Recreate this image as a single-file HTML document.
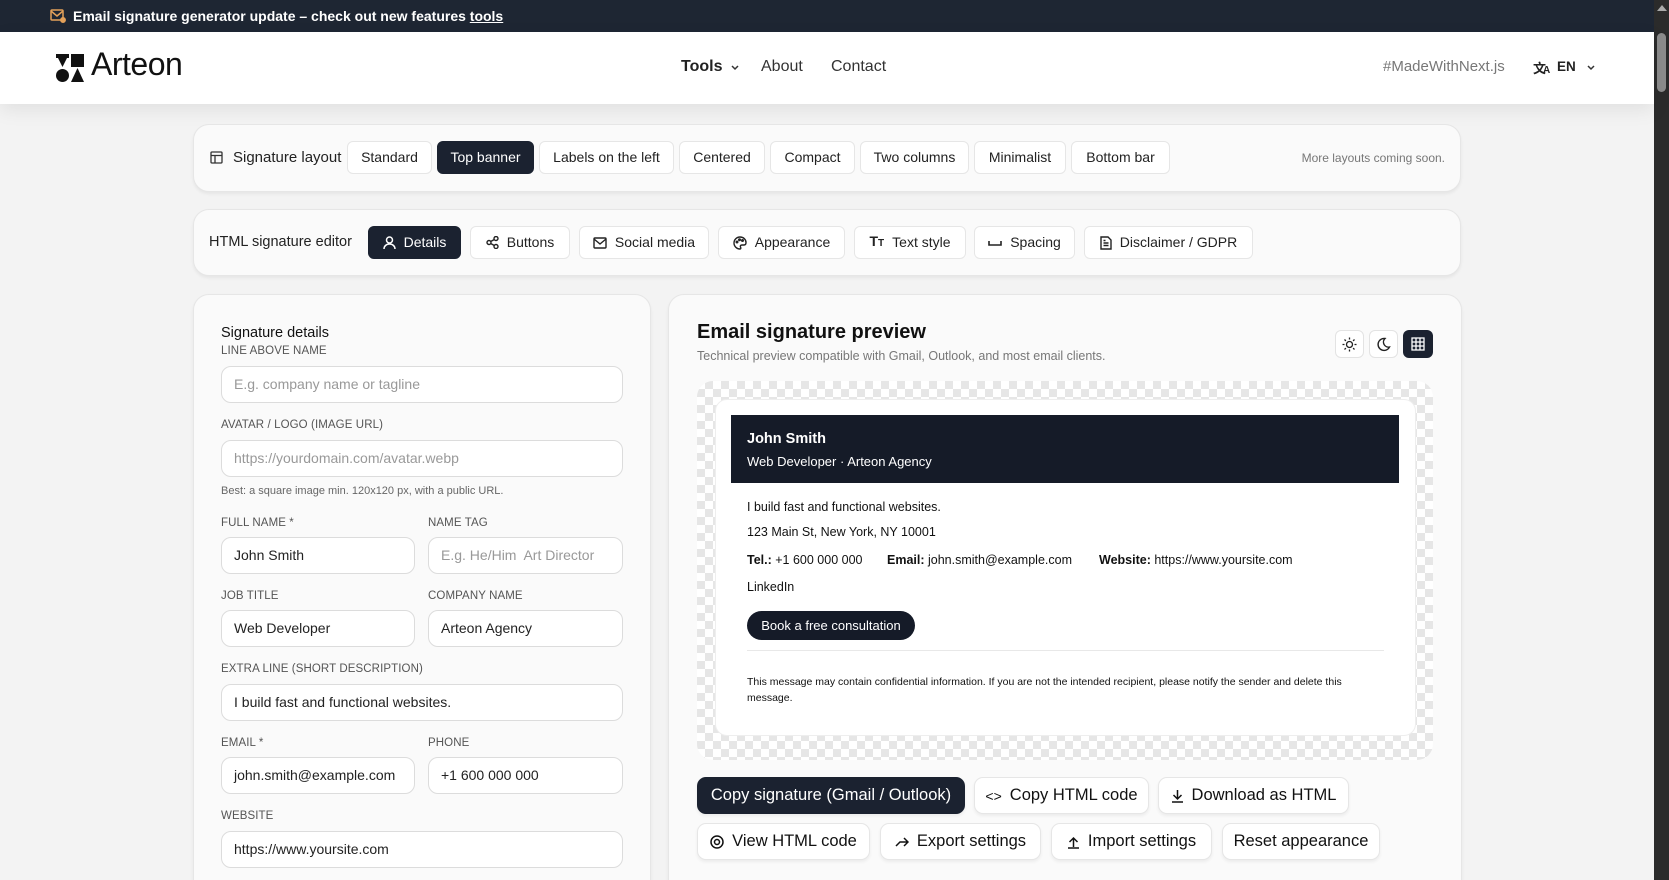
<!DOCTYPE html>
<html><head><meta charset="utf-8"><style>
*{box-sizing:border-box;margin:0;padding:0}
html,body{width:1669px;height:880px;overflow:hidden}
body{background:#f3f3f3;font-family:"Liberation Sans",sans-serif;color:#111}
#w{position:relative;width:1669px;height:880px;overflow:hidden}
.a{position:absolute}
.topbar{left:0;top:0;width:1654px;height:32px;background:#1e2633;color:#fff;font-size:14px;font-weight:bold;line-height:32px}
.hdr{left:0;top:32px;width:1654px;height:72px;background:#fff;box-shadow:0 6px 18px rgba(0,0,0,.08)}
.card{background:#fafafa;border:1px solid #e6e6e6;border-radius:16px;box-shadow:0 2px 3px rgba(0,0,0,.06)}
.btn{position:absolute;height:33px;border:1px solid #e6e6e6;background:#fff;border-radius:6px;font-size:14px;line-height:31px;text-align:center;color:#222;display:flex;align-items:center;justify-content:center;gap:8px;white-space:nowrap}
.btn.on{background:#1b2230;color:#fff;border-color:#1b2230}
.lbl{position:absolute;left:221px;font-size:11.5px;color:#555;text-transform:uppercase;letter-spacing:.1px}
.inp{position:absolute;height:37px;border:1px solid #dcdcdc;border-radius:10px;background:#fff;font-size:14px;line-height:35px;padding-left:12px;color:#222}
.ph{color:#999}
.b2{position:absolute;height:37px;border:1px solid #e6e6e6;border-radius:9px;background:#fff;font-size:16.5px;display:flex;align-items:center;justify-content:center;gap:8px;color:#111;box-shadow:0 2px 3px rgba(0,0,0,.06);white-space:nowrap}
.sig{font-family:"Liberation Sans",Arial,sans-serif;font-size:12.5px;color:#111;white-space:nowrap}
svg{display:block}
</style></head><body><div id="w">
<div class="a topbar"><span class="a" style="left:50px;top:9px"><svg width="16" height="14" viewBox="0 0 16 14" fill="none" stroke="#e4a15a" stroke-width="1.5"><rect x="1" y="1" width="12" height="10" rx="1"/><path d="M1 2l6 5 6-5"/><circle cx="13" cy="11" r="2.2" fill="#e4a15a"/></svg></span><span class="a" style="left:73px">Email signature generator update – check out new features <u>tools</u></span></div>
<div class="a" style="left:1654px;top:0;width:15px;height:880px;background:#2b2b2b"></div>
<div class="a" style="left:1657px;top:33px;width:9px;height:59px;background:#8c8c8c;border-radius:5px"></div>
<div class="a" style="left:1657px;top:5px;width:0;height:0;border-left:5px solid transparent;border-right:5px solid transparent;border-bottom:6px solid #aaa"></div>
<div class="a hdr">
 <svg class="a" style="left:56px;top:22px" width="28" height="28" viewBox="0 0 28 28"><rect x="0" y="0" width="13" height="4" fill="#111"/><path d="M0 0L6.5 13 13 0z" fill="#111"/><rect x="15" y="0" width="13" height="13" fill="#111"/><circle cx="6.5" cy="21.5" r="6.5" fill="#111"/><path d="M21.5 14L28 28H15z" fill="#111"/></svg>
 <div class="a" style="left:91px;top:14px;font-size:32px;color:#111;letter-spacing:-.5px">Arteon</div>
 <div class="a" style="left:681px;top:26px;font-size:16px;font-weight:bold;color:#222">Tools</div>
 <svg class="a" style="left:731px;top:33px" width="8" height="6" viewBox="0 0 8 6" fill="none" stroke="#333" stroke-width="1.5"><path d="M1 1l3 3 3-3"/></svg>
 <div class="a" style="left:761px;top:26px;font-size:16px;color:#333">About</div>
 <div class="a" style="left:831px;top:26px;font-size:16px;color:#333">Contact</div>
 <div class="a" style="left:1383px;top:26px;font-size:15px;color:#777">#MadeWithNext.js</div>
 <div class="a" style="left:1533px;top:26px;font-size:13px;font-weight:bold;color:#222;font-family:'Liberation Sans','Noto Sans CJK SC',sans-serif">文</div>
 <div class="a" style="left:1543px;top:33px;font-size:10px;font-weight:bold;color:#222">A</div>
 <div class="a" style="left:1557px;top:27px;font-size:13.5px;font-weight:bold;color:#222">EN</div>
 <svg class="a" style="left:1587px;top:33px" width="8" height="6" viewBox="0 0 8 6" fill="none" stroke="#333" stroke-width="1.5"><path d="M1 1l3 3 3-3"/></svg>
</div>

<div class="a card" style="left:193px;top:124px;width:1268px;height:68px"></div>
<svg class="a" style="left:210px;top:151px" width="13" height="13" viewBox="0 0 13 13" fill="none" stroke="#333" stroke-width="1.3"><rect x="1" y="1" width="11" height="11" rx="1"/><path d="M1 4.5h11M5 4.5v7.5"/></svg>
<div class="a" style="left:233px;top:149px;font-size:15px;color:#222">Signature layout</div>
<div class="btn" style="left:347px;top:141px;width:85px">Standard</div>
<div class="btn on" style="left:437px;top:141px;width:97px">Top banner</div>
<div class="btn" style="left:539px;top:141px;width:135px">Labels on the left</div>
<div class="btn" style="left:679px;top:141px;width:86px">Centered</div>
<div class="btn" style="left:770px;top:141px;width:85px">Compact</div>
<div class="btn" style="left:860px;top:141px;width:109px">Two columns</div>
<div class="btn" style="left:974px;top:141px;width:92px">Minimalist</div>
<div class="btn" style="left:1071px;top:141px;width:99px">Bottom bar</div>
<div class="a" style="left:1245px;top:151px;font-size:12px;color:#777;width:200px;text-align:right;white-space:nowrap">More layouts coming soon.</div>

<div class="a card" style="left:193px;top:209px;width:1268px;height:67px"></div>
<div class="a" style="left:209px;top:234px;font-size:14.5px;color:#222">HTML signature editor</div>
<div class="btn on" style="left:368px;top:226px;width:93px"><svg width="13" height="14" viewBox="0 0 13 14" fill="none" stroke="#fff" stroke-width="1.5"><circle cx="6.5" cy="4" r="3"/><path d="M1 13c0-3 2.5-5 5.5-5s5.5 2 5.5 5"/></svg>Details</div>
<div class="btn" style="left:470px;top:226px;width:100px"><svg width="13" height="13" viewBox="0 0 13 13" fill="none" stroke="#222" stroke-width="1.4"><circle cx="3" cy="6.5" r="2"/><circle cx="10" cy="2.5" r="2"/><circle cx="10" cy="10.5" r="2"/><path d="M4.7 5.5l3.6-2M4.7 7.5l3.6 2"/></svg>Buttons</div>
<div class="btn" style="left:579px;top:226px;width:130px"><svg width="14" height="12" viewBox="0 0 14 12" fill="none" stroke="#222" stroke-width="1.4"><rect x="1" y="1" width="12" height="10" rx="1"/><path d="M1 2l6 5 6-5"/></svg>Social media</div>
<div class="btn" style="left:718px;top:226px;width:127px"><svg width="14" height="14" viewBox="0 0 14 14" fill="none" stroke="#222" stroke-width="1.4"><path d="M7 1a6 6 0 1 0 0 12c1 0 1-1 .5-2s0-2 1.5-2h2c1.5 0 2-1 2-2.5C13 3.5 10.5 1 7 1z"/><circle cx="4" cy="6" r=".8"/><circle cx="6.5" cy="3.8" r=".8"/><circle cx="9.5" cy="4.5" r=".8"/></svg>Appearance</div>
<div class="btn" style="left:854px;top:226px;width:112px"><span style="font-size:14px;font-weight:bold">T<span style="font-size:10px">T</span></span>Text style</div>
<div class="btn" style="left:974px;top:226px;width:101px"><svg width="14" height="8" viewBox="0 0 14 8" fill="none" stroke="#222" stroke-width="1.6"><path d="M1 2v4h12V2"/></svg>Spacing</div>
<div class="btn" style="left:1084px;top:226px;width:169px"><svg width="12" height="14" viewBox="0 0 12 14" fill="none" stroke="#222" stroke-width="1.4"><path d="M1 1h7l3 3v9H1z"/><path d="M3.5 7h5M3.5 9.5h5M3.5 4.5h2"/></svg>Disclaimer / GDPR</div>

<div class="a card" style="left:193px;top:294px;width:458px;height:620px"></div>
<div class="a" style="left:221px;top:325px;font-size:14.5px;color:#111">Signature details</div>
<div class="lbl" style="top:345px">Line above name</div>
<div class="inp ph" style="left:221px;top:366px;width:402px">E.g. company name or tagline</div>
<div class="lbl" style="top:419px">Avatar / logo (image URL)</div>
<div class="inp ph" style="left:221px;top:440px;width:402px">https://yourdomain.com/avatar.webp</div>
<div class="a" style="left:221px;top:485px;font-size:11px;color:#666">Best: a square image min. 120x120 px, with a public URL.</div>
<div class="lbl" style="top:517px">Full name *</div>
<div class="lbl" style="top:517px;left:428px">Name tag</div>
<div class="inp" style="left:221px;top:537px;width:194px">John Smith</div>
<div class="inp ph" style="left:428px;top:537px;width:195px">E.g. He/Him&nbsp; Art Director</div>
<div class="lbl" style="top:590px">Job title</div>
<div class="lbl" style="top:590px;left:428px">Company name</div>
<div class="inp" style="left:221px;top:610px;width:194px">Web Developer</div>
<div class="inp" style="left:428px;top:610px;width:195px">Arteon Agency</div>
<div class="lbl" style="top:663px">Extra line (short description)</div>
<div class="inp" style="left:221px;top:684px;width:402px">I build fast and functional websites.</div>
<div class="lbl" style="top:737px">Email *</div>
<div class="lbl" style="top:737px;left:428px">Phone</div>
<div class="inp" style="left:221px;top:757px;width:194px">john.smith@example.com</div>
<div class="inp" style="left:428px;top:757px;width:195px">+1 600 000 000</div>
<div class="lbl" style="top:810px">Website</div>
<div class="inp" style="left:221px;top:831px;width:402px">https://www.yoursite.com</div>

<div class="a card" style="left:668px;top:294px;width:794px;height:620px"></div>
<div class="a" style="left:697px;top:321px;font-size:20px;font-weight:bold;color:#111">Email signature preview</div>
<div class="a" style="left:697px;top:349px;font-size:12.5px;color:#777">Technical preview compatible with Gmail, Outlook, and most email clients.</div>
<div class="a" style="left:1335px;top:330px;width:29px;height:28px;border:1px solid #e3e3e3;border-radius:6px;background:#fff"><svg style="margin:6px" width="15" height="15" viewBox="0 0 15 15" fill="none" stroke="#222" stroke-width="1.3"><circle cx="7.5" cy="7.5" r="3"/><path d="M7.5 0.5v2M7.5 12.5v2M0.5 7.5h2M12.5 7.5h2M2.5 2.5l1.4 1.4M11.1 11.1l1.4 1.4M2.5 12.5l1.4-1.4M11.1 3.9l1.4-1.4"/></svg></div>
<div class="a" style="left:1369px;top:330px;width:29px;height:28px;border:1px solid #e3e3e3;border-radius:6px;background:#fff"><svg style="margin:6px" width="15" height="15" viewBox="0 0 15 15" fill="none" stroke="#222" stroke-width="1.4"><path d="M9 1.5A6 6 0 1 0 13.5 10 5 5 0 0 1 9 1.5z"/></svg></div>
<div class="a" style="left:1403px;top:330px;width:30px;height:28px;border-radius:6px;background:#1b2230"><svg style="margin:7px 8px" width="14" height="14" viewBox="0 0 14 14" fill="none" stroke="#fff" stroke-width="1.3"><rect x="1" y="1" width="12" height="12"/><path d="M5 1v12M9 1v12M1 5h12M1 9h12"/></svg></div>

<div class="a" style="left:697px;top:381px;width:736px;height:379px;border-radius:16px;background-color:#fff;background-image:linear-gradient(45deg,#e6e6e6 25%,transparent 25%,transparent 75%,#e6e6e6 75%),linear-gradient(45deg,#e6e6e6 25%,transparent 25%,transparent 75%,#e6e6e6 75%);background-size:16px 16px;background-position:0 0,8px 8px"></div>
<div class="a" style="left:715px;top:399px;width:701px;height:337px;background:#fff;border-radius:12px;border:1px solid #eee"></div>
<div class="a" style="left:731px;top:415px;width:668px;height:68px;background:#151b28"></div>
<div class="a sig" style="left:747px;top:431px;color:#fff;font-size:14.5px;font-weight:bold">John Smith</div>
<div class="a sig" style="left:747px;top:454px;color:#fff;font-size:13px">Web Developer · Arteon Agency</div>
<div class="a sig" style="left:747px;top:500px">I build fast and functional websites.</div>
<div class="a sig" style="left:747px;top:525px">123 Main St, New York, NY 10001</div>
<div class="a sig" style="left:747px;top:553px"><b>Tel.:</b> +1 600 000 000</div>
<div class="a sig" style="left:887px;top:553px"><b>Email:</b> john.smith@example.com</div>
<div class="a sig" style="left:1099px;top:553px"><b>Website:</b> https://www.yoursite.com</div>
<div class="a sig" style="left:747px;top:580px">LinkedIn</div>
<div class="a sig" style="left:747px;top:611px;width:168px;height:29px;border-radius:15px;background:#151b28;color:#fff;line-height:29px;text-align:center;font-size:13px">Book a free consultation</div>
<div class="a" style="left:747px;top:650px;width:637px;height:1px;background:#e8e8e8"></div>
<div class="a sig" style="left:747px;top:674px;font-size:10.5px;line-height:16px;width:640px;white-space:normal">This message may contain confidential information. If you are not the intended recipient, please notify the sender and delete this message.</div>

<div class="b2" style="left:697px;top:777px;width:268px;background:#1b2230;color:#fff;border-color:#1b2230">Copy signature (Gmail / Outlook)</div>
<div class="b2" style="left:974px;top:777px;width:175px"><span style="font-size:14px">&lt;&gt;</span>Copy HTML code</div>
<div class="b2" style="left:1158px;top:777px;width:191px"><svg width="13" height="14" viewBox="0 0 13 14" fill="none" stroke="#111" stroke-width="1.5"><path d="M6.5 1v9M2.5 6l4 4 4-4M1 13h11"/></svg>Download as HTML</div>
<div class="b2" style="left:697px;top:823px;width:173px"><svg width="14" height="14" viewBox="0 0 14 14" fill="none" stroke="#111" stroke-width="1.5"><circle cx="7" cy="7" r="6"/><circle cx="7" cy="7" r="2.5"/></svg>View HTML code</div>
<div class="b2" style="left:880px;top:823px;width:161px"><svg width="14" height="12" viewBox="0 0 14 12" fill="none" stroke="#111" stroke-width="1.5"><path d="M1 10l4-4h8M9 2l4 4-4 4"/></svg>Export settings</div>
<div class="b2" style="left:1051px;top:823px;width:161px"><svg width="13" height="14" viewBox="0 0 13 14" fill="none" stroke="#111" stroke-width="1.5"><path d="M6.5 12V3M2.5 7l4-4 4 4M1 13h11"/></svg>Import settings</div>
<div class="b2" style="left:1222px;top:823px;width:158px">Reset appearance</div>
</div></body></html>
